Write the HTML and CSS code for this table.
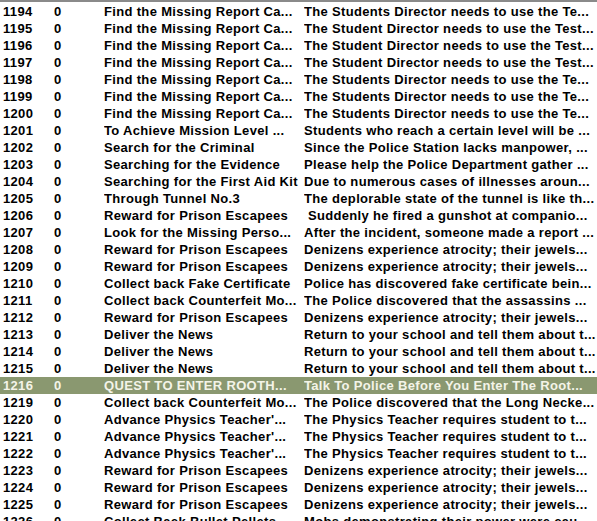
FILE: index.html
```html
<!DOCTYPE html>
<html>
<head>
<meta charset="utf-8">
<link rel="stylesheet" href="styles.css">
</head>
<body>
<div class="list">
  <div class="row"><span>1194</span><span>0</span><span>Find the Missing Report Ca...</span><span>The Students Director needs to use the Te...</span></div>
  <div class="row"><span>1195</span><span>0</span><span>Find the Missing Report Ca...</span><span>The Student Director needs to use the Test...</span></div>
  <div class="row"><span>1196</span><span>0</span><span>Find the Missing Report Ca...</span><span>The Student Director needs to use the Test...</span></div>
  <div class="row"><span>1197</span><span>0</span><span>Find the Missing Report Ca...</span><span>The Student Director needs to use the Test...</span></div>
  <div class="row"><span>1198</span><span>0</span><span>Find the Missing Report Ca...</span><span>The Students Director needs to use the Te...</span></div>
  <div class="row"><span>1199</span><span>0</span><span>Find the Missing Report Ca...</span><span>The Students Director needs to use the Te...</span></div>
  <div class="row"><span>1200</span><span>0</span><span>Find the Missing Report Ca...</span><span>The Students Director needs to use the Te...</span></div>
  <div class="row"><span>1201</span><span>0</span><span>To Achieve Mission Level ...</span><span>Students who reach a certain level will be ...</span></div>
  <div class="row"><span>1202</span><span>0</span><span>Search for the Criminal</span><span>Since the Police Station lacks manpower, ...</span></div>
  <div class="row"><span>1203</span><span>0</span><span>Searching for the Evidence</span><span>Please help the Police Department gather ...</span></div>
  <div class="row"><span>1204</span><span>0</span><span>Searching for the First Aid Kit</span><span>Due to numerous cases of illnesses aroun...</span></div>
  <div class="row"><span>1205</span><span>0</span><span>Through Tunnel No.3</span><span>The deplorable state of the tunnel is like th...</span></div>
  <div class="row"><span>1206</span><span>0</span><span>Reward for Prison Escapees</span><span>&nbsp;Suddenly he fired a gunshot at companio...</span></div>
  <div class="row"><span>1207</span><span>0</span><span>Look for the Missing Perso...</span><span>After the incident, someone made a report ...</span></div>
  <div class="row"><span>1208</span><span>0</span><span>Reward for Prison Escapees</span><span>Denizens experience atrocity; their jewels...</span></div>
  <div class="row"><span>1209</span><span>0</span><span>Reward for Prison Escapees</span><span>Denizens experience atrocity; their jewels...</span></div>
  <div class="row"><span>1210</span><span>0</span><span>Collect back Fake Certificate</span><span>Police has discovered fake certificate bein...</span></div>
  <div class="row"><span>1211</span><span>0</span><span>Collect back Counterfeit Mo...</span><span>The Police discovered that the assassins ...</span></div>
  <div class="row"><span>1212</span><span>0</span><span>Reward for Prison Escapees</span><span>Denizens experience atrocity; their jewels...</span></div>
  <div class="row"><span>1213</span><span>0</span><span>Deliver the News</span><span>Return to your school and tell them about t...</span></div>
  <div class="row"><span>1214</span><span>0</span><span>Deliver the News</span><span>Return to your school and tell them about t...</span></div>
  <div class="row"><span>1215</span><span>0</span><span>Deliver the News</span><span>Return to your school and tell them about t...</span></div>
  <div class="row selected"><span>1216</span><span>0</span><span>QUEST TO ENTER ROOTH...</span><span>Talk To Police Before You Enter The Root...</span></div>
  <div class="row"><span>1219</span><span>0</span><span>Collect back Counterfeit Mo...</span><span>The Police discovered that the Long Necke...</span></div>
  <div class="row"><span>1220</span><span>0</span><span>Advance Physics Teacher'...</span><span>The Physics Teacher requires student to t...</span></div>
  <div class="row"><span>1221</span><span>0</span><span>Advance Physics Teacher'...</span><span>The Physics Teacher requires student to t...</span></div>
  <div class="row"><span>1222</span><span>0</span><span>Advance Physics Teacher'...</span><span>The Physics Teacher requires student to t...</span></div>
  <div class="row"><span>1223</span><span>0</span><span>Reward for Prison Escapees</span><span>Denizens experience atrocity; their jewels...</span></div>
  <div class="row"><span>1224</span><span>0</span><span>Reward for Prison Escapees</span><span>Denizens experience atrocity; their jewels...</span></div>
  <div class="row"><span>1225</span><span>0</span><span>Reward for Prison Escapees</span><span>Denizens experience atrocity; their jewels...</span></div>
  <div class="row"><span>1226</span><span>0</span><span>Collect Back Bullet Pellets</span><span>Mobs demonstrating their power were cau...</span></div>
</div>
</body>
</html>
```

FILE: styles.css
```css
html, body {
  margin: 0;
  padding: 0;
  background: #ffffff;
  overflow: hidden;
}
.list {
  width: 597px;
  height: 521px;
  box-sizing: border-box;
  border-top: 2px solid #8a8a8a;
  padding-top: 1px;
  overflow: hidden;
  font-family: "Liberation Sans", Arial, sans-serif;
  font-weight: bold;
  font-size: 13px;
  letter-spacing: 0.33px;
  color: #000000;
}
.row {
  display: grid;
  grid-template-columns: 51px 50px 200px 1fr;
  padding-left: 3px;
  height: 17px;
  line-height: 17px;
  white-space: nowrap;
}
.row span {
  overflow: hidden;
}
.row.selected {
  background: #8a9870;
  color: #f4f4e8;
}
```
